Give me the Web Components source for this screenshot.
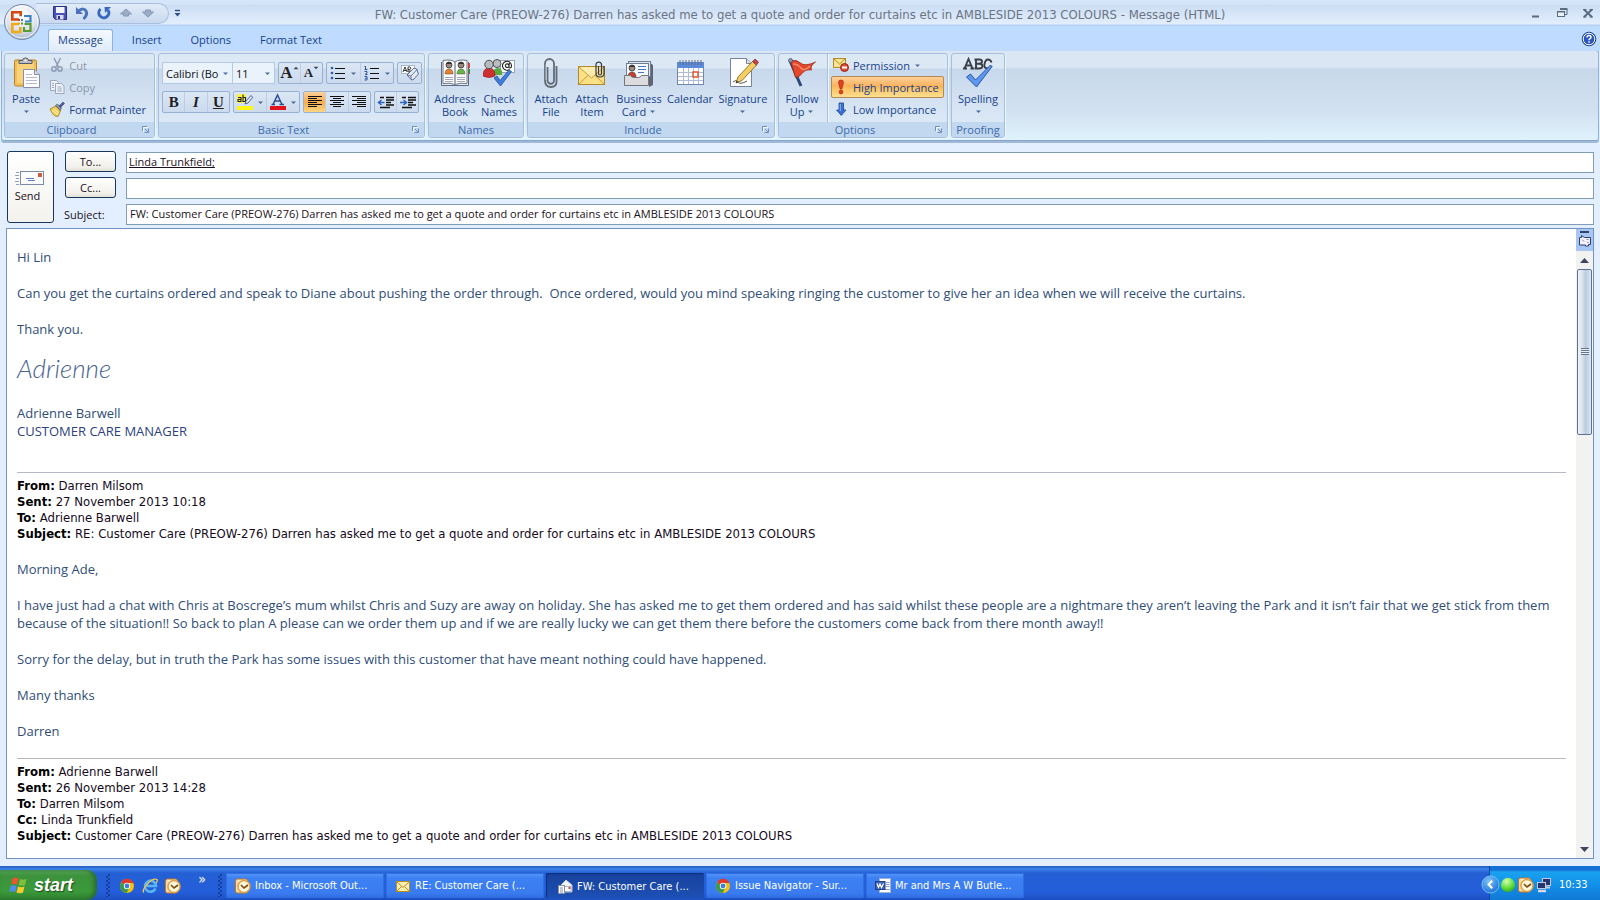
<!DOCTYPE html>
<html lang="en">
<head>
<meta charset="utf-8">
<meta name="viewport" content="width=device-width, initial-scale=1">
<title>FW: Customer Care (PREOW-276) - Message (HTML)</title>
<style>
  html, body { margin: 0; height: 100%; }
  body { font: 11px/13px "Open Sans", "Noto Sans", sans-serif; color: #15428b; background: #e3efff; overflow: hidden; }
</style>
</head>
<body>
<mail-window></mail-window>

<script>
const define = (tag, css, html, init) => customElements.define(tag, class extends HTMLElement {
  constructor() {
    super();
    this.attachShadow({ mode: 'open' });
  }
  connectedCallback() {
    if (this.shadowRoot.childNodes.length) return;
    const t = document.createElement('template');
    t.innerHTML = `<style>*{box-sizing:border-box}${css}</style>` + (typeof html === 'function' ? html(this) : html);
    this.shadowRoot.append(t.content.cloneNode(true));
    if (init) init(this);
  }
});

/* ---------- icons: [viewBox size, drawing] ---------- */
const person = (x, y, c) => `<path d="M${x - 4} ${y + 9}q0-5 4-5t4 5z" fill="${c}" stroke="#444" stroke-width=".5"/><circle cx="${x}" cy="${y}" r="3" fill="#9a8a80" stroke="#333" stroke-width=".8"/><path d="M${x - 3} ${y - 1}q3-4 6 0" fill="#333"/>`;
const clockIcon = `<rect x=".5" y="1" width="12" height="14" rx="2" fill="#f8d9a0" stroke="#c07828"/><path d="M3 3h9" stroke="#fff"/><circle cx="9" cy="8.500" r="6" fill="#fff6dc" stroke="#e0a040" stroke-width="1.500"/><path d="M6 7l3 3 4-3" fill="none" stroke="#7a4a10" stroke-width="1.600"/>`;
const chrome = `<circle cx="8" cy="8" r="7" fill="#f4c20d"/><path d="M8 8L2 4.400A7 7 0 0 1 14.500 5H8z" fill="#db3a2c"/><path d="M8 8L2 4.400A7 7 0 0 0 7.500 15L10.500 10z" fill="#3a9a48"/><circle cx="8" cy="8" r="3.200" fill="#fff"/><circle cx="8" cy="8" r="2.400" fill="#3d7fe0"/>`;
const bars = rows => rows.map(([a, b], i) => `<path d="M${a} ${2.5 + i * 2}H${b}" stroke="#111"/>`).join('');
const ICONS = {
  office: [36, `<defs><radialGradient id="g" cx=".5" cy=".3" r=".8"><stop offset="0" stop-color="#fff"/><stop offset=".55" stop-color="#dfe4ec"/><stop offset="1" stop-color="#8fa3bd"/></radialGradient></defs><circle cx="18" cy="18" r="17.500" fill="url(#g)" stroke="#6f87a8"/><circle cx="18" cy="18" r="16" fill="none" stroke="#fff" opacity=".8"/>
    <g fill="none" stroke-width="2.600"><path d="M15 15.500H8.300V8.300h8.400v4" stroke="#d24a13"/><path d="M20 12h6.500v5.500H21" stroke="#3b82c4" stroke-width="2.200"/><path d="M15 20H8.300v8h8v-5" stroke="#f0a81c"/><path d="M20.500 20h6v7h-6.500v-4" stroke="#5a9a32" stroke-width="2.200"/></g>
    <g fill="#d24a13"><rect x="14" y="15" width="2" height="2"/><rect x="17" y="15" width="2" height="2" fill="#3b82c4"/><rect x="14" y="18.500" width="2" height="2" fill="#f0a81c"/><rect x="17" y="18.500" width="2" height="2" fill="#5a9a32"/></g>`],
  save: [16, `<path d="M1.500 1.500h13v13h-11l-2-2z" fill="#4a52b8" stroke="#2a2f86"/><rect x="4" y="2" width="8.500" height="6" fill="#f3f5fc"/><rect x="4.500" y="10" width="7" height="4.500" fill="#d7daf0"/><rect x="6" y="11" width="2" height="3" fill="#2a2f86"/>`],
  undo: [16, `<path d="M5 5.500q5-3 7 .5t-2.500 8" fill="none" stroke="#4a72bc" stroke-width="3"/><path d="M2 2v7h7z" fill="#4a72bc"/>`],
  redo: [16, `<path d="M4.500 4a5 5 0 1 0 7.500 1" fill="none" stroke="#3a68bc" stroke-width="3"/><path d="M8.500 2H15L9 8z" fill="#3a68bc"/>`],
  up: [16, `<path d="M8 4l5.500 5h-3v2h-5V9h-3z" fill="#9dacc6" stroke="#8396b6"/>`],
  down: [16, `<path d="M8 12L2.500 7h3V5h5v2h3z" fill="#9dacc6" stroke="#8396b6"/>`],
  qat: [9, `<path d="M2 1.500h5" stroke="#2c4d86" stroke-width="1.400"/><path d="M1.500 4h6L4.500 7.500z" fill="#2c4d86"/>`],
  min: [14, `<path d="M3 10.500h7" stroke="#5d6b80" stroke-width="2"/>`],
  restore: [14, `<path d="M5.500 4V3.500H12v5h-2" fill="none" stroke="#5d6b80"/><path d="M5 3h7.500" stroke="#5d6b80" stroke-width="2"/><rect x="2.500" y="5.500" width="7" height="5" fill="#e8f0fb" stroke="#5d6b80"/><path d="M2 6h8" stroke="#5d6b80"/>`],
  close: [14, `<path d="M3 3.500l8 7.500M11 3.500L3 11" stroke="#5d6b80" stroke-width="2"/><path d="M2 3.500h3.500M8.500 3.500H12M2 11h3.500M8.500 11H12" stroke="#5d6b80"/>`],
  help: [16, `<circle cx="8" cy="8" r="6.800" fill="#2b56bd" stroke="#163a8c"/><circle cx="8" cy="8" r="5.800" fill="none" stroke="#fff"/><path d="M6 6.500q0-2 2-2t2 1.800q0 1-1.200 1.600-.8.400-.8 1.400M8 10.300v1.500" fill="none" stroke="#fff" stroke-width="1.500"/>`],
  arrow: [7, `<path d="M1 2.500h5L3.500 5z" fill="#4a6b9c"/>`],
  launcher: [9, `<path d="M1.500 6V1.500H6" fill="none" stroke="#6f90bd"/><path d="M4 4l3 3M7.500 3.500v4h-4" fill="none" stroke="#6f90bd"/><path d="M2.500 7V2.500H7" fill="none" stroke="#fff" opacity=".8"/>`],
  paste: [32, `<rect x="4.500" y="3" width="22" height="26" rx="1.500" fill="#f1bf55" stroke="#b98224"/><rect x="7" y="6" width="17" height="20" fill="#f8d27c"/><path d="M9 6.500V3.500h3.500q0-2.500 3-2.500t3 2.500H22v3z" fill="#b9bcc6" stroke="#565b68"/><circle cx="15.500" cy="3.500" r="1" fill="#fff"/><path d="M13.500 12.500h11l5 5v13h-16z" fill="#fdfdff" stroke="#8590a8"/><path d="M24.500 12.500v5h5" fill="#d5dbea" stroke="#8590a8"/><path d="M16 17.500h6M16 20.500h11M16 23.500h11M16 26.500h11" stroke="#b4bccd"/>`],
  cut: [16, `<g fill="none" stroke="#8f9cb3" stroke-width="1.500"><path d="M5 1l4.500 9M11.500 1L7 10"/><circle cx="5" cy="12" r="2.200"/><circle cx="11" cy="12" r="2.200"/></g>`],
  copy: [16, `<g fill="#eef2f8" stroke="#9aa8c0"><path d="M1.500 1.500h6l2 2v8h-8z"/><path d="M6.500 4.500h6l2.500 2.500v7.500H6.500z"/><path d="M8.500 8h4M8.500 10h4.500M8.500 12h4.500M3 4.500h2M3 6.500h2M3 8.500h2"/></g>`],
  painter: [16, `<path d="M1 8l6-3 4.500 4.500L9 15.500q-5 0-8-7.500z" fill="#f3cf58" stroke="#9a7420" stroke-width=".8"/><path d="M3 9.500l6 4M5 8l5 4" stroke="#fff3b8"/><path d="M6.500 4.500L8.500 3 12.500 7 11 9.500z" fill="#8e96a6" stroke="#414858" stroke-width=".6"/><path d="M10 5l4-4 1.500 1.500-4 4z" fill="#4a5f9a" stroke="#26355e" stroke-width=".5"/>`],
  bullets: [18, `<g fill="#2c56a8"><circle cx="3" cy="4" r="1.300"/><circle cx="3" cy="9" r="1.300"/><circle cx="3" cy="14" r="1.300"/></g><path d="M6 4.500h10M6 9.500h10M6 14.500h10" stroke="#111" stroke-width="1"/>`],
  numbers: [18, `<path d="M2.500 2v3M1.500 2.500h1M1.500 5.500h3M1.500 7.500h2.500v1.500l-2 1.500h2.500M1.500 12.500h2.500v3.500h-2.500M2 14.300h2" fill="none" stroke="#2c56a8" stroke-width="1"/><path d="M7 4.500h9M7 9.500h9M7 14.500h9" stroke="#111" stroke-width="1"/>`],
  clear: [20, `<rect x="1.500" y="2.500" width="13" height="8" fill="#fff" stroke="#7b8fb0" stroke-width=".6"/><path d="M3 9l2-5 2 5M3.700 7.500h2.600M8 9V4h1.500q1.300 0 1.300 1.200T9.500 6.500H8q2 0 2 1.200T8.500 9z" fill="none" stroke="#222" stroke-width=".9"/><path d="M14 5l-7 7 4 4.500 2 .5 5.500-6-2-5z" fill="#e4e9f2" stroke="#4c6189" stroke-width=".9"/><path d="M7 12l4 1v3.500M11 13l6.500-7" fill="none" stroke="#4c6189" stroke-width=".8"/>`],
  highlight: [18, `<rect x="1" y="1" width="9" height="9" fill="#f8f24a"/><rect x="1" y="13" width="16" height="4" fill="#fdf614"/><path d="M2 4.500h3v4H2v-2h3M7 1.500v7h2.500v-4H7" fill="none" stroke="#222" stroke-width="1.100"/><path d="M9 11l1-3 5-5.500 1.800 1.800L12 10z" fill="#dfe6f3" stroke="#3b5a92" stroke-width=".9"/>`],
  fontcolor: [18, `<path d="M4 11.500L8.500 2l4.500 9.500M5.500 8h6M2.500 11.500H6M10.500 11.500H15" fill="none" stroke="#2c4f92" stroke-width="1.500"/><rect x="1" y="13" width="16" height="4" fill="#e3121a"/>`],
  left: [16, bars([[1, 15], [1, 10], [1, 15], [1, 10], [1, 15], [1, 10]])],
  center: [16, bars([[1, 15], [4, 12], [1, 15], [4, 12], [1, 15], [4, 12]])],
  right: [16, bars([[1, 15], [6, 15], [1, 15], [6, 15], [1, 15], [6, 15]])],
  outdent: [18, `<path d="M9 4.500h8M9 7h8M9 9.500h5M9 12h8M3 4.500h4M3 14.500h10" stroke="#111" stroke-width="1.400"/><path d="M7.500 9.500H2M4.500 7L1.500 9.500l3 2.500" fill="none" stroke="#2c62c8" stroke-width="1.500"/>`],
  indent: [18, `<path d="M9 4.500h8M9 7h8M9 9.500h5M9 12h8M3 4.500h4M3 14.500h10" stroke="#111" stroke-width="1.400"/><path d="M1 9.500h5.500M4.500 7l3 2.500-3 2.500" fill="none" stroke="#2c62c8" stroke-width="1.500"/>`],
  address: [32, `<path d="M2.500 5v23.500h27V5" fill="#e9edf3" stroke="#5f6b80"/><path d="M4 3.500q8-1.500 12 1.500 4-3 12-1.500v23q-8-1-12 1-4-2-12-1z" fill="#fff" stroke="#6a7486"/><path d="M16 5v23" stroke="#8891a3" stroke-width="1.500"/><path d="M30 6v5M30 12v5" stroke="#c44" stroke-width="2"/><path d="M30 12v4" stroke="#3a8b3a" stroke-width="2"/>${person(10, 8, '#e8812a')}${person(22, 8, '#67b644')}<path d="M6 20.500h8M6 22.500h8M6 24.500h8M18 20.500h8M18 22.500h8M18 24.500h8" stroke="#a2a8b6"/>`],
  check: [32, `<rect x="17.500" y="3.500" width="14" height="12" fill="#fdfdff" stroke="#98a3b8"/><path d="M26.500 12.500a4.500 4.500 0 1 1 2-4q0 2.500-1.500 2.500t-1-2l.5-3M26 8.500a1.800 1.800 0 1 1-3.600.3 1.800 1.800 0 0 1 3.600-.3" fill="none" stroke="#222" stroke-width="1.100"/><path d="M10 18q0-7 5-7t4 7z" fill="#57ab3c"/><circle cx="14" cy="6.500" r="4" fill="#b9bcc2" stroke="#555"/><path d="M0 19q0-8 6-8t6 8q-6 3-12 0z" fill="#cf2f2f" stroke="#8b1c1c" stroke-width=".6"/><circle cx="6" cy="7.500" r="4.200" fill="#b7babf" stroke="#4e4e4e"/><path d="M11 21l3-2 3 4.500L26 13l2.500 1.500L17.500 29z" fill="#3f7fdc" stroke="#1f4fa0" stroke-width=".8"/>`],
  clip: [32, `<path d="M12.500 10v13.500a3 3 0 0 0 6.500 0V6.500a4.500 4.500 0 0 0-9 0v17q0 6.500 6 6.500t5.500-6.500V9" fill="none" stroke="#626a76" stroke-width="1.800"/><path d="M11 7v16" stroke="#d7dbe2" stroke-width=".7"/>`],
  attachitem: [32, `<rect x="2.500" y="9.500" width="26" height="18" fill="#fbe086" stroke="#b28a2e"/><path d="M3 27l9.500-9M28 27l-9.500-9" stroke="#c79c3c"/><path d="M3 10l12.500 11L28 10" fill="#fdecae" stroke="#c79c3c"/><path d="M22.500 9v7.500a1.500 1.500 0 0 0 3 0V7a3 3 0 0 0-5.500 0v9.500q0 3.500 4 3.500t4-3.500V9" fill="none" stroke="#333a48" stroke-width="1.200"/>`],
  card: [32, `<path d="M26 5l4 3v20l-4 2z" fill="#5e6675"/><rect x="5.500" y="4.500" width="22" height="15" fill="#dfe6f2" stroke="#6f7b90"/><rect x="3.500" y="6.500" width="22" height="15" fill="#f5f9ff" stroke="#6f7b90"/>${person(9, 11, '#c43b32')}<path d="M15 9.500h8M15 12.500h8M15 15.500h6" stroke="#4676c4"/><path d="M1.500 18.500h6q1 2 3 2h5q2 0 3-2h7v10h-24z" fill="#dcdcde" stroke="#73767e"/>`],
  calendar: [32, `<rect x="3.500" y="5.500" width="26" height="22" fill="#fff" stroke="#7285ae"/><rect x="3" y="5" width="27" height="6" fill="#5a8ad8"/><path d="M4 15.500h25M4 19.500h25M4 23.500h25M9.500 11v16M14.500 11v16M19.500 11v16M24.500 11v16" stroke="#aebbd6"/><path d="M6 3v5M9 3v5M12 3v5M15 3v5M18 3v5M21 3v5M24 3v5M27 3v5" stroke="#5e6d8c"/><rect x="19" y="15" width="5" height="5" fill="#fff" stroke="#e2552c" stroke-width="1.500"/>`],
  signature: [32, `<path d="M3.500 1.500h16l5 5v23h-21z" fill="#fff" stroke="#75829b"/><path d="M19.500 1.500v5h5" fill="#dbe1ec" stroke="#75829b"/><path d="M9 26l2-6L25.500 4.500l4 3.500L15 23.500z" fill="#f3ce62" stroke="#8f6a20" stroke-width=".9"/><path d="M25.500 4.500L28 2l3.500 3-2 3z" fill="#c2474b" stroke="#7e2b30" stroke-width=".7"/><path d="M9 26l.8-2.500 1.700 1.500z" fill="#222"/><path d="M6 25q3-3 5 0t9-1" fill="none" stroke="#555"/>`],
  flag: [32, `<path d="M4 4l11 25" stroke="#2f4678" stroke-width="3"/><path d="M4.500 4q6-2 10 2t15-1q-6 4-4 8-6-1-9 3t-7 4.500z" fill="#e4472b" stroke="#9c2714" stroke-width=".8"/><path d="M7 7q5 0 8 4t9-2" fill="none" stroke="#f58a6c" stroke-width="1.500"/><circle cx="4.500" cy="3.500" r="2" fill="#8d97ad" stroke="#3c4c74" stroke-width=".7"/>`],
  permission: [16, `<rect x=".5" y="1.500" width="12" height="9" fill="#fbe48e" stroke="#b28a2e"/><path d="M1 2l5.500 5L12 2" fill="none" stroke="#b28a2e"/><circle cx="11.500" cy="10.500" r="4" fill="#de4a36" stroke="#9a2415"/><rect x="9" y="9.500" width="5" height="2" fill="#fff"/>`],
  high: [16, `<path d="M5.500 3.500q0-2.500 2.500-2.500t2.500 2.500L8.800 10H7.200z" fill="#e2401f" stroke="#a02a12" stroke-width=".7"/><circle cx="8" cy="13" r="1.900" fill="#e2401f" stroke="#a02a12" stroke-width=".7"/>`],
  low: [16, `<path d="M6 2h4.500v7H13l-4.700 5.500L3.500 9H6z" fill="#3a6fd0" stroke="#1f4a9c" stroke-width=".8"/><path d="M7.300 3v7" stroke="#8db6f2"/>`],
  spelling: [32, `<g fill="none" stroke="#3a3f48" stroke-width="1.900"><path d="M2.500 11.500L6.500 2l4 9.500M4 8.500h5M1 11.500h4M8.500 11.500h3.500"/><path d="M14 2.500v9M12.500 2.500h5q2.500 0 2.500 2t-2.500 2.200H14M17.500 6.700q3 .2 3 2.400t-3 2.400h-5"/><path d="M29.500 5.500q-1-3-3.500-3t-3.500 4.500 3.500 4.500q2.500 0 3.500-2.500"/></g><path d="M4.500 20l4-3 5 6L28.500 8 30 9.500 14.500 30z" fill="#5e97ec" stroke="#2658b0"/>`],
  send: [32, `<path d="M2 9.500h3M1 12.500h4M2 15.500h3M1 18.500h4M2 21.500h3" stroke="#8ea0be" stroke-width="1"/><rect x="6.500" y="8.500" width="23" height="13" fill="#fdfdff" stroke="#7d8aa6"/><rect x="24" y="10" width="4" height="4" fill="#cf5a3c"/><path d="M12 15.500h8M14 17.500h7" stroke="#5f7fc0"/>`],
  browse: [14, `<path d="M1.500 3.500h2v-2l3 2h6v7h-2v1.500h-3V11h-6z" fill="#f4f2fb" stroke="#2c3d72"/><path d="M4 5.500l2 2M8.500 5.500h2M9 8l2 1" stroke="#8d86bd"/>`],
  sup: [11, `<path d="M1 8h9L5.500 3z" fill="#3c4560"/>`],
  sdown: [11, `<path d="M1 3h9L5.500 8z" fill="#3c4560"/>`],
  windows: [20, `<path d="M3.500 3.500q3-2 6 0L8 9.500q-3-1.500-6 0z" fill="#e8582c"/><path d="M11 4q3 1.500 6.500 0L16 10q-3 1.500-6.500 0z" fill="#7cc13c"/><path d="M1.700 11q3-1.500 6 0l-1.500 6q-3-1.500-6 0z" fill="#4f8ef0"/><path d="M9 11.500q3 1.500 6.500 0l-1.500 6q-3 1.500-6.500 0z" fill="#f8cb2c"/>`],
  chrome: [16, chrome],
  ie: [16, `<path d="M13.500 10.500A5.500 5.500 0 1 1 14 8H5" fill="none" stroke="#58b6f4" stroke-width="2.600"/><path d="M2 14.500Q-.5 13 5 6.500T15 1.500q1 1-1 3.500" fill="none" stroke="#f0c648" stroke-width="1.300"/>`],
  outlook: [16, clockIcon],
  mail: [16, `<rect x="1.500" y="3.500" width="13" height="10" fill="#fdf0b0" stroke="#c08a24"/><path d="M2 4l6 5.500L14 4M2 13l4.500-4.500M14 13L9.500 8.500" fill="none" stroke="#c08a24"/>`],
  openmail: [16, `<path d="M4 6l5-5 6 5v7H4z" fill="#f4f6fb" stroke="#b8c2d8"/><path d="M5 7.500h9v5H5z" fill="#fff" stroke="#a8b4cc"/><rect x="11.500" y="8" width="2" height="2" fill="#d24a3a"/><rect x="1.500" y="6.500" width="6" height="8" fill="#fff" stroke="#8391ae"/><path d="M3 9h3M3 11h3M3 13h3" stroke="#8391ae"/>`],
  word: [16, `<rect x="4.500" y=".5" width="11" height="14" fill="#fff" stroke="#9fb2d4"/><path d="M11 4.500h3.500M11 6.500h3.500M11 8.500h3.500M7 11.500h7.500" stroke="#8aa2cc"/><rect x=".5" y="3.500" width="9.500" height="8" fill="#3f66b8" stroke="#1f3f88"/><path d="M2 5.500l1.500 4L5 6l1.500 3.500L8.500 5.500" fill="none" stroke="#fff" stroke-width="1.200"/>`],
  tray: [20, `<defs><radialGradient id="t" cx=".4" cy=".3" r=".8"><stop offset="0" stop-color="#7cc4f8"/><stop offset="1" stop-color="#1268d8"/></radialGradient></defs><circle cx="10" cy="10" r="9" fill="url(#t)" stroke="#7fc0f4"/><path d="M11.800 6L8 10l3.800 4" fill="none" stroke="#fff" stroke-width="2.200"/>`],
  online: [16, `<defs><radialGradient id="o" cx=".4" cy=".25" r=".8"><stop offset="0" stop-color="#d2ffb0"/><stop offset=".6" stop-color="#5fdc3a"/><stop offset="1" stop-color="#2fa01c"/></radialGradient></defs><circle cx="8" cy="8" r="7.200" fill="url(#o)"/>`],
  network: [16, `<rect x="6.500" y="1.500" width="8" height="7" fill="#27346c" stroke="#c2c8de"/><path d="M8 10.500h6" stroke="#c9cee0" stroke-width="2"/><rect x="1.500" y="5.500" width="8" height="6" fill="#27346c" stroke="#c2c8de"/><path d="M2 14h8" stroke="#d4d8e8" stroke-width="2.500"/>`]
};
define('app-icon', `:host{display:block;flex:none}svg{display:block}`, el => {
  const [box, art] = ICONS[el.getAttribute('name')];
  const size = el.getAttribute('size') || box;
  return `<svg width="${size}" height="${size}" viewBox="0 0 ${box} ${box}" aria-hidden="true">${art}</svg>`;
});

/* ---------- title bar ---------- */
define('title-bar', `
  :host{display:flex;align-items:center;height:26px;background:linear-gradient(#d6e6fa 0 4px,#cbddf4 5px,#e3eefc 24px,#b4d2f4 25px);position:relative}
  .orb{position:absolute;left:4px;top:4px;z-index:2}
  button{border:0;background:none;padding:0;margin:0;display:grid;place-items:center}
  .qat{display:flex;align-items:center;gap:6px;height:21px;margin-left:36px;padding:0 12px 0 16px;border:1px solid #a9bfdd;border-left:0;border-radius:0 11px 11px 0;background:linear-gradient(#e1ebf8,#c9d9ef)}
  .more{margin-left:4px}
  h1{flex:1;margin:0;text-align:center;font:13px/18px "DejaVu Sans Condensed","Open Sans",sans-serif;color:#6a7484;white-space:nowrap;padding-top:4px}
  .win{display:flex;gap:12px;padding-right:5px;width:182px;justify-content:flex-end}
`, `
  <button class="orb" aria-label="Office button"><app-icon name="office"></app-icon></button>
  <div class="qat">
    <button aria-label="Save"><app-icon name="save"></app-icon></button>
    <button aria-label="Undo"><app-icon name="undo"></app-icon></button>
    <button aria-label="Redo"><app-icon name="redo"></app-icon></button>
    <button aria-label="Previous item"><app-icon name="up"></app-icon></button>
    <button aria-label="Next item"><app-icon name="down"></app-icon></button>
  </div>
  <button class="more" aria-label="Customise toolbar"><app-icon name="qat"></app-icon></button>
  <h1><slot></slot></h1>
  <div class="win">
    <button aria-label="Minimise"><app-icon name="min"></app-icon></button>
    <button aria-label="Restore"><app-icon name="restore"></app-icon></button>
    <button aria-label="Close"><app-icon name="close"></app-icon></button>
  </div>`);

/* ---------- tab strip ---------- */
define('tab-strip', `
  :host{display:flex;align-items:flex-end;gap:9px;height:25px;padding:0 3px 0 48px;background:#bfdbff;position:relative;z-index:1}
  button{font:inherit;color:inherit;border:1px solid transparent;border-bottom:0;background:none;height:22px;padding:0 9px 2px;border-radius:3px 3px 0 0}
  .on{background:linear-gradient(#f4f9ff,#e0ebf8);border-color:#8db2e3}
  .help{margin-left:auto;padding:0;height:auto;border:0;align-self:center}
`, `
  <button class="on" role="tab" aria-selected="true">Message</button>
  <button role="tab">Insert</button>
  <button role="tab">Options</button>
  <button role="tab">Format Text</button>
  <button class="help" aria-label="Help"><app-icon name="help"></app-icon></button>`);

/* ---------- ribbon parts ---------- */
define('ribbon-group', `
  :host{display:flex;flex-direction:column;height:85px;border:1px solid #a5bfdf;border-radius:3px;box-shadow:1px 1px 0 #eef6ff;overflow:hidden;background:linear-gradient(#dde8f5 0 14px,#c8d8ec 15px,#dbe8f6 67px)}
  .body{flex:1;display:flex;padding:0 3px}
  footer{display:flex;align-items:center;height:15px;background:#c1d8f0;color:#3e6aaa}
  span{flex:1;text-align:center}
  button{border:0;background:none;padding:0 4px 0 3px}
`, el => `<div class="body"><slot></slot></div><footer><span>${el.getAttribute('label')}</span>${el.hasAttribute('launcher') ? `<button aria-label="${el.getAttribute('label')} settings"><app-icon name="launcher"></app-icon></button>` : ''}</footer>`);

define('big-button', `
  :host{display:block}
  button{width:100%;font:inherit;color:inherit;border:0;background:none;padding:3px 0 0;display:flex;flex-direction:column;align-items:center;gap:3px;text-align:center}
  .t{display:flex;flex-direction:column;align-items:center;white-space:nowrap}
  .l{display:flex;align-items:center;gap:3px;height:13px}
`, el => {
  const [a, b] = el.getAttribute('label').split('|');
  const arrow = el.hasAttribute('menu') ? '<app-icon name="arrow"></app-icon>' : '';
  return `<button><app-icon name="${el.getAttribute('icon')}"></app-icon><span class="t"><span class="l">${a}</span><span class="l">${b || ''}${arrow}</span></span></button>`;
});

define('row-button', `
  :host{display:block}
  button{width:100%;height:22px;font:inherit;color:inherit;border:1px solid transparent;background:none;padding:0 4px 0 0;display:flex;align-items:center;gap:4px;white-space:nowrap}
  :host([disabled]) button{color:#8d97a8}
  :host([pressed]) button{border-color:#b48a50;border-radius:2px;background:linear-gradient(#fdd09a,#fbb25c 45%,#fdc565 60%,#fede90)}
  :host([inset]) button{padding-left:1px}
`, el => `<button${el.hasAttribute('disabled') ? ' disabled' : ''}><app-icon name="${el.getAttribute('icon')}"></app-icon><slot></slot>${el.hasAttribute('menu') ? '<app-icon name="arrow"></app-icon>' : ''}</button>`);

define('font-tools', `
  :host{display:flex;flex-direction:column;gap:7px;padding-top:8px}
  .row{display:flex;gap:3px;height:22px}
  .set{display:flex;border:1px solid #98b1d3;border-radius:2px;background:linear-gradient(#dce7f5,#cbdaed)}
  button{flex:1;display:flex;align-items:center;justify-content:center;gap:3px;border:0;padding:0;background:none;color:#222;font:bold 15px/20px "Liberation Serif",serif}
  button+button{border-left:1px solid #bccde4}
  .on{background:linear-gradient(#fbd09a,#f9ac4e 50%,#fdd680)}
  .pick{display:grid;border:1px solid #b5c9e5;background:#eaf2fb}
  .pick+.pick{margin-left:-4px}
  .pick>*{grid-area:1/1}
  .pick app-icon{justify-self:end;align-self:center;margin-right:3px;pointer-events:none}
  select{appearance:none;border:0;background:none;font:inherit;color:#111;padding:0 0 0 3px;height:20px;outline:0}
  .f{width:71px}.s{width:43px}.w45{width:45px}.w68{width:68px}.w24{width:25px}.w66{width:67px}
  .i{font-style:italic}.u{text-decoration:underline}
  .b{font-size:17px}.sm{font-size:13px}
  .a{gap:0}.a app-icon{align-self:flex-start;padding-top:2px}
`, `
  <div class="row">
    <span class="pick f"><select aria-label="Font"><option>Calibri (Bo</option></select><app-icon name="arrow"></app-icon></span>
    <span class="pick s"><select aria-label="Font size"><option>11</option></select><app-icon name="arrow"></app-icon></span>
    <span class="set w45"><button class="a b" aria-label="Grow font">A<app-icon name="sup" size="6"></app-icon></button><button class="a sm" aria-label="Shrink font">A<app-icon name="sdown" size="6"></app-icon></button></span>
    <span class="set w68"><button aria-label="Bullets"><app-icon name="bullets"></app-icon><app-icon name="arrow"></app-icon></button><button aria-label="Numbering"><app-icon name="numbers"></app-icon><app-icon name="arrow"></app-icon></button></span>
    <span class="set w24"><button aria-label="Clear formatting"><app-icon name="clear"></app-icon></button></span>
  </div>
  <div class="row">
    <span class="set w68"><button>B</button><button class="i">I</button><button class="u">U</button></span>
    <span class="set w66"><button aria-label="Highlight"><app-icon name="highlight"></app-icon><app-icon name="arrow"></app-icon></button><button aria-label="Font colour"><app-icon name="fontcolor"></app-icon><app-icon name="arrow"></app-icon></button></span>
    <span class="set w68"><button class="on" aria-label="Align left"><app-icon name="left"></app-icon></button><button aria-label="Centre"><app-icon name="center"></app-icon></button><button aria-label="Align right"><app-icon name="right"></app-icon></button></span>
    <span class="set w45"><button aria-label="Decrease indent"><app-icon name="outdent"></app-icon></button><button aria-label="Increase indent"><app-icon name="indent"></app-icon></button></span>
  </div>`);

define('ribbon-bar', `
  :host{display:flex;gap:3px;height:91px;margin:-1px 1px 0;padding:2px 3px 0 2px;border:1px solid #8db2e3;border-bottom-color:#86a6cc;border-radius:3px;background:linear-gradient(#dbe6f4 0 16px,#c7d8ea 18px,#d2e1f0 60px,#e0f3fd 90px);box-shadow:0 2px 0 #9fb9d6}
  .col{display:flex;flex-direction:column}
  .clip{width:151px}.text{width:267px}.opt{width:170px}
  .w40{width:40px}.w42{width:42px}.w46{width:46px}.w50{width:50px}.w52{width:52px}.w56{width:56px}
  .c{margin-left:4px}
  .sep{border-left:1px solid #a9c0de;margin-left:5px;padding-left:3px;box-shadow:inset 1px 0 0 #eef5fd;flex:1}
`, `
  <ribbon-group class="clip" label="Clipboard" launcher>
    <big-button class="w42" icon="paste" label="Paste" menu></big-button>
    <div class="col c">
      <row-button icon="cut" disabled>Cut</row-button>
      <row-button icon="copy" disabled>Copy</row-button>
      <row-button icon="painter">Format Painter</row-button>
    </div>
  </ribbon-group>
  <ribbon-group class="text" label="Basic Text" launcher><font-tools></font-tools></ribbon-group>
  <ribbon-group label="Names">
    <big-button class="w46" icon="address" label="Address|Book"></big-button>
    <big-button class="w42" icon="check" label="Check|Names"></big-button>
  </ribbon-group>
  <ribbon-group label="Include" launcher>
    <big-button class="w40" icon="clip" label="Attach|File"></big-button>
    <big-button class="w42" icon="attachitem" label="Attach|Item"></big-button>
    <big-button class="w52" icon="card" label="Business|Card" menu></big-button>
    <big-button class="w50" icon="calendar" label="Calendar"></big-button>
    <big-button class="w56" icon="signature" label="Signature" menu></big-button>
  </ribbon-group>
  <ribbon-group class="opt" label="Options" launcher>
    <big-button class="w40" icon="flag" label="Follow|Up" menu></big-button>
    <div class="col sep">
      <row-button inset icon="permission" menu>Permission</row-button>
      <row-button inset icon="high" pressed>High Importance</row-button>
      <row-button inset icon="low">Low Importance</row-button>
    </div>
  </ribbon-group>
  <ribbon-group label="Proofing">
    <big-button class="w46" icon="spelling" label="Spelling" menu></big-button>
  </ribbon-group>`);

/* ---------- address form ---------- */
define('address-form', `
  :host{display:block;color:#1c1020}
  form{display:grid;grid-template-columns:47px 52px 1fr;grid-template-rows:repeat(3,22px);gap:4px 10px;padding:10px 6px 3px 7px}
  button{font:inherit;color:inherit;border:1px solid #17375f;border-radius:3px;background:linear-gradient(#fff,#f1f0ea 80%,#e2dfd5);padding:0;height:21px;margin:0 0 0 1px}
  .send{grid-row:1/4;height:72px;margin:0;padding:0 2px 9px 0;display:flex;flex-direction:column;align-items:center;justify-content:center;background:linear-gradient(#fff,#f3f2ed)}
  .send span{margin-top:-6px;padding-right:4px}
  input{align-self:end;height:21px;min-width:0;border:1px solid #7f9db9;background:#fff;padding:0 3px 2px;font:inherit;color:inherit;outline:0}
  .to{text-decoration:underline;padding-left:2px}
  label{align-self:center}
`, `<form>
  <button type="button" class="send"><app-icon name="send"></app-icon><span>Send</span></button>
  <button type="button">To...</button><input class="to" aria-label="To" value="Linda Trunkfield;">
  <button type="button">Cc...</button><input aria-label="Cc">
  <label for="subject">Subject:</label><input id="subject" value="FW: Customer Care (PREOW-276) Darren has asked me to get a quote and order for curtains etc in AMBLESIDE 2013 COLOURS">
</form>`);

/* ---------- message ---------- */
define('scroll-rail', `
  :host{display:flex;flex-direction:column;width:17px;background:#f2f2f0}
  button{border:0;padding:0;display:grid;place-items:center;background:none;height:18px}
  .split{height:22px;background:#a8c6f2;border-top:0;align-content:start;gap:1px;padding-top:2px}
  .split::before{content:"";width:9px;height:2px;background:#32436e}
  .track{flex:1}
  .thumb{height:29%;margin:0 1px;border:1px solid #5f6f9c;border-radius:2px;background:linear-gradient(90deg,#f0f4f8,#dde4ec 30%,#b9cbdc 60%,#dfe8f0);display:grid;place-items:center}
  .thumb::before{content:"";width:8px;height:7px;background:repeating-linear-gradient(#66758f 0 1px,#e9eef4 1px 2px)}
`, `<button class="split" aria-label="Select browse object"><app-icon name="browse"></app-icon></button>
  <button aria-label="Scroll up"><app-icon name="sup"></app-icon></button>
  <div class="track"><div class="thumb"></div></div>
  <button aria-label="Scroll down"><app-icon name="sdown"></app-icon></button>`);

define('quoted-header', `
  :host{display:block;border-top:1px solid #b5b8c8;padding-top:5px;margin-bottom:18px;font:13px/16px "DejaVu Sans Condensed","Open Sans",sans-serif;color:#150a1c}
  p{margin:0}b{color:#000}
`, el => el.getAttribute('rows').split('|').map(r => { const i = r.indexOf(':') + 1; return `<p><b>${r.slice(0, i)}</b>${r.slice(i)}</p>`; }).join(''));

define('message-body', `
  :host{display:flex;flex:1;min-height:0;margin:0 6px 7px;border:1px solid #6f93c4;background:#fff}
  article{flex:1;min-width:0;overflow-y:auto;scrollbar-width:none;padding:19px 10px 0;font-size:13px;line-height:18px;color:#2f4d78}
  p{margin:0 0 18px}
  .sig{font:italic 300 26px/28px Lato,"Open Sans",sans-serif;margin:-2px 0 22px;color:#4a6490}
  .last{margin-bottom:32px}
  .caps{color:#2c4280}
`, `<article>
  <p>Hi Lin</p>
  <p>Can you get the curtains ordered and speak to Diane about pushing the order through.&nbsp; Once ordered, would you mind speaking ringing the customer to give her an idea when we will receive the curtains.</p>
  <p>Thank you.</p>
  <p class="sig">Adrienne</p>
  <p class="last">Adrienne Barwell<br><span class="caps">CUSTOMER CARE MANAGER</span></p>
  <quoted-header rows="From: Darren Milsom|Sent: 27 November 2013 10:18|To: Adrienne Barwell|Subject: RE: Customer Care (PREOW-276) Darren has asked me to get a quote and order for curtains etc in AMBLESIDE 2013 COLOURS"></quoted-header>
  <p>Morning Ade,</p>
  <p>I have just had a chat with Chris at Boscrege’s mum whilst Chris and Suzy are away on holiday. She has asked me to get them ordered and has said whilst these people are a nightmare they aren’t leaving the Park and it isn’t fair that we get stick from them because of the situation!! So back to plan A please can we order them up and if we are really lucky we can get them there before the customers come back from there month away!!</p>
  <p>Sorry for the delay, but in truth the Park has some issues with this customer that have meant nothing could have happened.</p>
  <p>Many thanks</p>
  <p>Darren</p>
  <quoted-header rows="From: Adrienne Barwell|Sent: 26 November 2013 14:28|To: Darren Milsom|Cc: Linda Trunkfield|Subject: Customer Care (PREOW-276) Darren has asked me to get a quote and order for curtains etc in AMBLESIDE 2013 COLOURS"></quoted-header>
</article><scroll-rail></scroll-rail>`);

/* ---------- taskbar ---------- */
define('task-button', `
  :host{display:block;width:158px;min-width:0}
  button{width:100%;height:25px;border:0;border-radius:2px;padding:0 8px 0 9px;display:flex;align-items:center;gap:4px;font:inherit;color:#fff;white-space:nowrap;background:linear-gradient(#5a98f8,#3c81f3 20%,#3a7bf0 80%,#2f6be0);box-shadow:inset 0 0 0 1px #2f6fe4}
  :host([active]) button{background:linear-gradient(#16429c,#1e4fb4);box-shadow:inset 1px 1px 1px #0e2f78;padding:2px 8px 0 11px}
`, el => `<button><app-icon name="${el.getAttribute('icon')}"></app-icon><span><slot></slot></span></button>`);

define('task-bar', `
  :host{display:flex;align-items:stretch;height:34px;color:#fff;font:11px/14px "DejaVu Sans Condensed","Open Sans",sans-serif;background:linear-gradient(#2a62c4 0 1px,#3a86ee 3px,#3478e4 4px,#2460d4 7px,#245edb 26px,#1d4ec0)}
  button{border:0;background:none;padding:0;color:inherit;font:inherit}
  .start{width:97px;margin-top:4px;padding:0 0 0 9px;display:flex;align-items:center;gap:5px;border-radius:0 10px 10px 0;background:linear-gradient(#5aa95a,#3c923c 20%,#3a9a3a 70%,#2f7f2f);box-shadow:inset -3px 0 4px #2a6a30;font:italic bold 18px/20px "Liberation Sans",sans-serif;text-shadow:1px 1px 1px #1c4a1c}
  .grip{width:4px;margin:8px 0 3px;background:repeating-conic-gradient(#16409c 0 25%,transparent 0 50%) 0 0/4px 4px}
  .quick{display:flex;align-items:center;gap:7px;margin:6px 12px 0 9px;width:87px}
  .quick .chev{margin-left:auto;align-self:flex-start;font-size:14px;line-height:14px}
  nav{flex:1;min-width:0;display:flex;gap:2px;padding:7px 0 0 4px}
  .tray{position:relative;display:flex;align-items:center;gap:2px;width:111px;padding:4px 0 0 10px;border-left:1px solid #0a4aa4;background:linear-gradient(#1470d4 0 4px,#19a2f0 6px,#128ee8 20px,#1078d4)}
  .hide{position:absolute;left:-9px;top:9px}
  time{margin-left:5px}
  .g1{margin-left:9px}
`, `
  <button class="start"><app-icon name="windows"></app-icon>start</button>
  <span class="grip g1"></span>
  <div class="quick">
    <button aria-label="Chrome"><app-icon name="chrome"></app-icon></button>
    <button aria-label="Internet Explorer"><app-icon name="ie"></app-icon></button>
    <button aria-label="Outlook"><app-icon name="outlook"></app-icon></button>
    <button class="chev" aria-label="More">»</button>
  </div>
  <span class="grip"></span>
  <nav>
    <task-button icon="outlook">Inbox - Microsoft Out...</task-button>
    <task-button icon="mail">RE: Customer Care (...</task-button>
    <task-button icon="openmail" active>FW: Customer Care (...</task-button>
    <task-button icon="chrome">Issue Navigator - Sur...</task-button>
    <task-button icon="word">Mr and Mrs A W Butle...</task-button>
  </nav>
  <div class="tray">
    <button class="hide" aria-label="Hide icons"><app-icon name="tray" size="19"></app-icon></button>
    <app-icon name="online"></app-icon><app-icon name="outlook"></app-icon><app-icon name="network"></app-icon>
    <time>10:33</time>
  </div>`);

define('mail-window', `:host{display:flex;flex-direction:column;height:100vh;background:#e3efff}`, `
  <title-bar>FW: Customer Care (PREOW-276) Darren has asked me to get a quote and order for curtains etc in AMBLESIDE 2013 COLOURS - Message (HTML)</title-bar>
  <tab-strip></tab-strip>
  <ribbon-bar></ribbon-bar>
  <address-form></address-form>
  <message-body></message-body>
  <task-bar></task-bar>`);
</script>
</body>
</html>
